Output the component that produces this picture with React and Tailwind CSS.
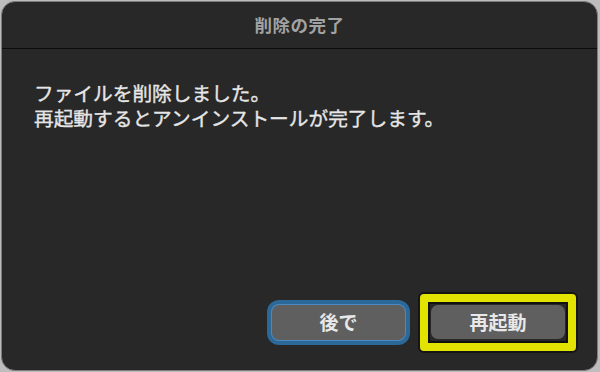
export default function App() {
  const font = { fontFamily: '"Noto Sans CJK JP", "Noto Sans", sans-serif' }

  return (
    <div className="w-[600px] h-[372px] bg-[#bdbdbd] pt-[1px] pl-[1px]" style={font}>
      <div className="w-[597px] h-[370px] rounded-[14px] border border-[#7c7c7c] bg-[#282828] flex flex-col overflow-hidden">
        <div className="h-[47px] shrink-0 flex items-center justify-center border-b border-[#0c0c0c]">
          <span className="text-[17.5px] font-bold text-[#a2a2a2] tracking-[0.5px]">削除の完了</span>
        </div>

        <div className="flex-1 flex flex-col pl-[32px] pr-[32px] pt-[31px] pb-[30px]">
          <div className="text-[19.7px] leading-[25px] text-[#e6e6e6] [-webkit-text-stroke:0.35px_#e6e6e6]">
            <div className="h-[25px]">ファイルを削除しました。</div>
            <div className="h-[25px]">再起動するとアンインストールが完了します。</div>
          </div>

          <div className="mt-auto flex justify-end gap-[26px]">
            <button className="w-[133px] h-[35px] rounded-[7px] bg-[#5f5f5f] text-[19px] font-bold text-[#e8e8e8] shadow-[0_0_0_1px_#4a8ac0,0_0_0_5px_#2c6898]">
              後で
            </button>
            <span className="relative flex">
              <button className="w-[134px] h-[34px] rounded-[7px] bg-[#5f5f5f] text-[19px] font-bold text-[#e8e8e8]">
                再起動
              </button>
              <span className="absolute -inset-[11px] rounded-[4px] border-[8px] border-[#e3e300] shadow-[0_0_0_2px_#151515,inset_0_0_0_2px_#111111] pointer-events-none" />
            </span>
          </div>
        </div>
      </div>
    </div>
  )
}
